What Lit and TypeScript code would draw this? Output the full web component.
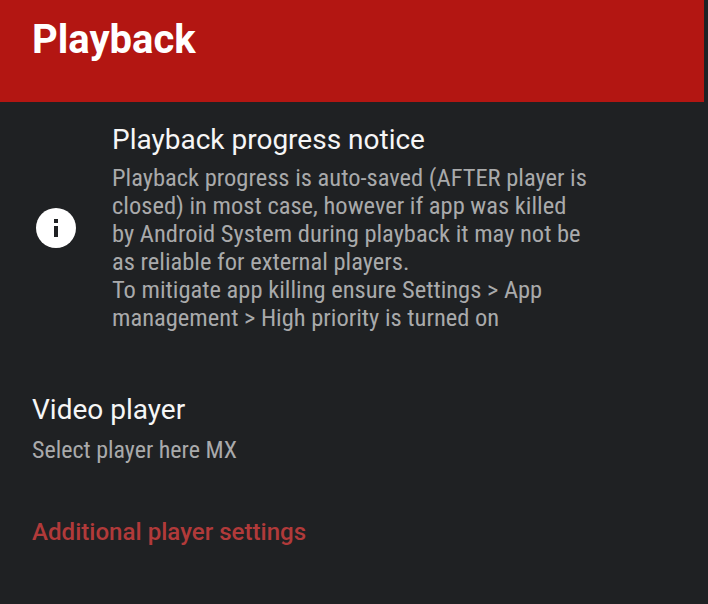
import { LitElement, html, css } from 'lit';
import { customElement } from 'lit/decorators.js';

@customElement('app-root')
export class AppRoot extends LitElement {
  static styles = css`
    :host {
      display: block;
      width: 708px;
      height: 604px;
      overflow: hidden;
      background: #1f2124;
      font-family: Roboto, 'Liberation Sans', sans-serif;
    }

    .page {
      height: 604px;
      margin-right: 4px;
      background: #1f2123;
    }

    .toolbar {
      height: 102px;
      box-sizing: border-box;
      padding: 16px 0 0 32px;
      background: #b31612;
      color: #fff;
      font-size: 40px;
      font-weight: 700;
      line-height: 48px;
    }

    .notice {
      display: flex;
      align-items: center;
      padding: 22px 32px 0 36px;
    }

    .notice svg {
      flex: none;
      width: 40px;
      height: 40px;
      margin-right: 36px;
    }

    .title {
      color: #f6f6f6;
      font-size: 28px;
      line-height: 32px;
    }

    .summary {
      color: #a9aaab;
      font-size: 24.5px;
      line-height: 28px;
      font-stretch: condensed;
      white-space: pre-line;
    }

    .notice .summary {
      margin-top: 8px;
    }

    .player {
      padding: 62px 32px 0;
    }

    .player .summary {
      margin-top: 10px;
      font-size: 24px;
    }

    .category {
      padding: 52px 32px 0;
      color: #b13a3a;
      font-size: 24.1px;
      font-weight: 500;
      line-height: 32px;
    }
  `;

  render() {
    return html`
      <div class="page">
        <div class="toolbar">Playback</div>
        <div class="notice">
          <svg viewBox="0 0 40 40">
            <circle cx="20" cy="20" r="20" fill="#fff"></circle>
            <rect x="18" y="18" width="4" height="11" fill="#1f2123"></rect>
            <rect x="18" y="11" width="4" height="4" fill="#1f2123"></rect>
          </svg>
          <div>
            <div class="title">Playback progress notice</div>
            <div class="summary">Playback progress is auto-saved (AFTER player is
closed) in most case, however if app was killed
by Android System during playback it may not be
as reliable for external players.
To mitigate app killing ensure Settings &gt; App
management &gt; High priority is turned on</div>
          </div>
        </div>
        <div class="player">
          <div class="title">Video player</div>
          <div class="summary">Select player here MX</div>
        </div>
        <div class="category">Additional player settings</div>
      </div>
    `;
  }
}
